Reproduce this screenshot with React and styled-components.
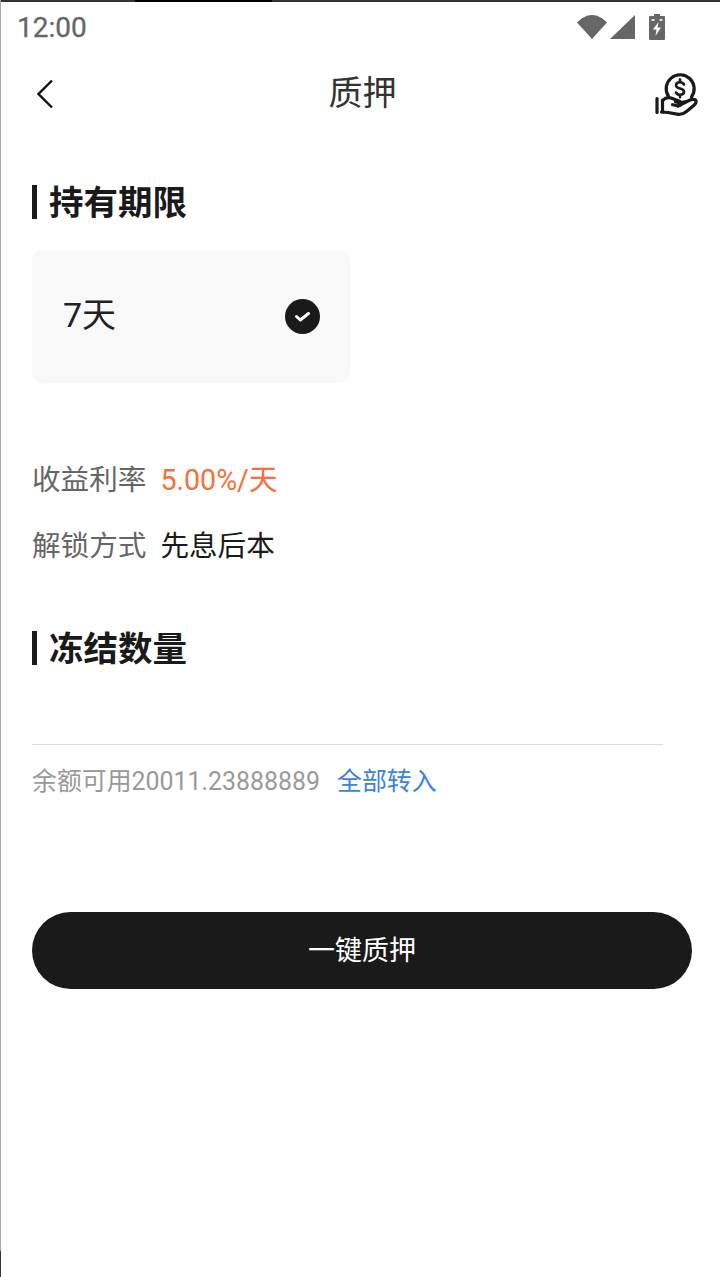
import React from "react";
import styled, { createGlobalStyle } from "styled-components";

const GlobalStyle = createGlobalStyle`
  html, body {
    margin: 0;
    padding: 0;
    background: #fff;
    font-family: Roboto, "Noto Sans CJK SC", sans-serif;
  }
`;

const Page = styled.div`
  width: 720px;
  height: 1277px;
  box-sizing: border-box;
  overflow: hidden;
  background: #fff;
  border-left: 1px solid;
  border-image: linear-gradient(to bottom, #a8a8a8 1250px, #333 1250px) 1;
`;

const TopEdge = styled.div`
  height: 2px;
  margin-left: -1px;
  background: linear-gradient(to right, #333 135px, #000 135px, #000 272px, #333 272px);
`;

const StatusBar = styled.div`
  height: 50px;
  padding: 0 55px 0 16px;
  display: flex;
  align-items: center;
  justify-content: space-between;
`;

const Clock = styled.span`
  font-size: 28px;
  font-weight: 400;
  color: #666;
  -webkit-text-stroke: 0.3px #666;
`;

const StatusIcons = styled.div`
  display: flex;
  align-items: center;
  gap: 14px;
`;

const StatusIconGroup = styled.div`
  display: flex;
  align-items: flex-end;
  gap: 3px;
`;

const NavBar = styled.div`
  height: 80px;
  padding: 0 22px 0 26px;
  display: grid;
  grid-template-columns: 1fr auto 1fr;
  align-items: center;
`;

const BackSvg = styled.svg`
  margin: 3px 0 0 5px;
`;

const CoinSvg = styled.svg`
  justify-self: end;
  margin-top: 5px;
`;

const NavTitle = styled.h1`
  margin: 0 0 4px;
  font-size: 34px;
  font-weight: 400;
  color: #333;
`;

const Content = styled.div`
  padding: 53px 27px 0 31px;
`;

const SectionTitle = styled.h2`
  margin: 0;
  padding-left: 12px;
  height: 34px;
  line-height: 36px;
  border-left: 5px solid #1a1a1a;
  font-size: 34.5px;
  font-weight: 700;
  color: #1a1a1a;
`;

const Card = styled.div`
  width: 318px;
  height: 133px;
  box-sizing: border-box;
  margin-top: 31px;
  padding: 0 30px 0 31px;
  display: flex;
  align-items: center;
  justify-content: space-between;
  background: #f9f9f9;
  border-radius: 10px;
`;

const CardLabel = styled.span`
  margin-bottom: 8px;
  font-size: 34px;
  color: #222;
`;

const InfoList = styled.div`
  margin-top: 76px;
  display: flex;
  flex-direction: column;
  gap: 24px;
`;

const InfoRow = styled.div`
  display: flex;
  gap: 14px;
  height: 42px;
  line-height: 42px;
  font-size: 28.6px;
`;

const InfoLabel = styled.span`
  color: #666;
`;

const InfoValue = styled.span`
  color: ${(p) => p.$color || "#1a1a1a"};
`;

const FreezeSection = styled.div`
  margin-top: 64px;
`;

const AmountLine = styled.div`
  width: 631px;
  height: 80px;
  box-sizing: border-box;
  border-bottom: 1px solid #dedede;
`;

const BalanceRow = styled.div`
  margin-top: 19px;
  display: flex;
  gap: 17px;
  height: 36px;
  line-height: 36px;
  font-size: 24.9px;
`;

const BalanceText = styled.span`
  color: #999;
`;

const TransferAll = styled.a`
  color: #3b82e6;
`;

const SubmitButton = styled.button`
  display: block;
  width: 660px;
  height: 77px;
  margin-top: 112px;
  padding: 0 0 4px;
  border: 0;
  border-radius: 39px;
  background: #1a1a1a;
  color: #fff;
  font-family: inherit;
  font-size: 27px;
`;

function WifiIcon() {
  return (
    <svg width="30" height="26" viewBox="0 0 30 26">
      <path d="M0 8.500C4 4.500 9.500 1 15 1s11 3.500 15 7.500L15 25z" fill="#666" />
    </svg>
  );
}

function SignalIcon() {
  return (
    <svg width="25" height="26" viewBox="0 0 25 26">
      <path d="M25 1v24H0z" fill="#666" />
    </svg>
  );
}

function BatteryIcon() {
  return (
    <svg width="16" height="26" viewBox="0 0 16 26">
      <path d="M5 0h6v2h4a1 1 0 0 1 1 1v22a1 1 0 0 1-1 1H1a1 1 0 0 1-1-1V3a1 1 0 0 1 1-1h4z" fill="#666" />
      <path d="M2.500 5h3v2h-3zM10.500 5h3v2h-3z" fill="#ddd" />
      <path d="M9.500 8 4 15.500h3.500L6.500 22 12 13.500H8.500z" fill="#fff" />
    </svg>
  );
}

function BackIcon() {
  return (
    <BackSvg width="28" height="32" viewBox="0 0 28 32">
      <path d="M20 2.500 6.500 16 20 29.500" fill="none" stroke="#111" strokeWidth="2.400" />
    </BackSvg>
  );
}

function CoinHandIcon() {
  return (
    <CoinSvg width="44" height="44" viewBox="0 0 44 44" fill="none" stroke="#1a1a1a" strokeWidth="3.200" strokeLinecap="round" strokeLinejoin="round">
      <path d="M14.500 23.500A14 14 0 1 1 37.500 24" />
      <path d="M21.500 28.800a14 14 0 0 0 9.500 0" />
      <path d="M30 11.500c-.8-1.400-2.200-2.200-4-2.200-2.300 0-4 1.200-4 3s1.700 2.700 4 3.200 4 1.300 4 3.200-1.700 3-4 3c-1.800 0-3.200-.8-4-2.200M26 6.500v2.800M26 21.700v2.600" strokeWidth="2.600" />
      <path d="M3 25.500v14" />
      <path d="M8.500 27.500v11.500" />
      <path d="M8.500 27.500c2.500-2.500 5.500-3.500 8.500-2.500l8 3c3 1.300 2 5-1 4.700l-5.500-1" />
      <path d="M24 33l11-5.500c3-1.500 6.500-1.500 7 .5.500 1.700-.5 3-2 4.300l-7.500 6.200c-3 2.500-6 3.300-9.500 2.700l-9-1.700c-2.500-.5-4.500-.5-6.500-.5" />
    </CoinSvg>
  );
}

function CheckBadge() {
  return (
    <svg width="35" height="35" viewBox="0 0 35 35">
      <circle cx="17.500" cy="17.500" r="17.500" fill="#1a1a1a" />
      <path d="M11.500 17.500l3.800 3.500 8.200-6.500" fill="none" stroke="#fff" strokeWidth="3" strokeLinecap="round" strokeLinejoin="round" />
    </svg>
  );
}

export default function App() {
  return (
    <Page>
      <GlobalStyle />
      <TopEdge />
      <StatusBar>
        <Clock>12:00</Clock>
        <StatusIcons>
          <StatusIconGroup>
            <WifiIcon />
            <SignalIcon />
          </StatusIconGroup>
          <BatteryIcon />
        </StatusIcons>
      </StatusBar>
      <NavBar>
        <BackIcon />
        <NavTitle>质押</NavTitle>
        <CoinHandIcon />
      </NavBar>
      <Content>
        <SectionTitle>持有期限</SectionTitle>
        <Card>
          <CardLabel>7天</CardLabel>
          <CheckBadge />
        </Card>
        <InfoList>
          <InfoRow>
            <InfoLabel>收益利率</InfoLabel>
            <InfoValue $color="#f5703c">5.00%/天</InfoValue>
          </InfoRow>
          <InfoRow>
            <InfoLabel>解锁方式</InfoLabel>
            <InfoValue>先息后本</InfoValue>
          </InfoRow>
        </InfoList>
        <FreezeSection>
          <SectionTitle>冻结数量</SectionTitle>
          <AmountLine />
          <BalanceRow>
            <BalanceText>余额可用20011.23888889</BalanceText>
            <TransferAll>全部转入</TransferAll>
          </BalanceRow>
        </FreezeSection>
        <SubmitButton>一键质押</SubmitButton>
      </Content>
    </Page>
  );
}
